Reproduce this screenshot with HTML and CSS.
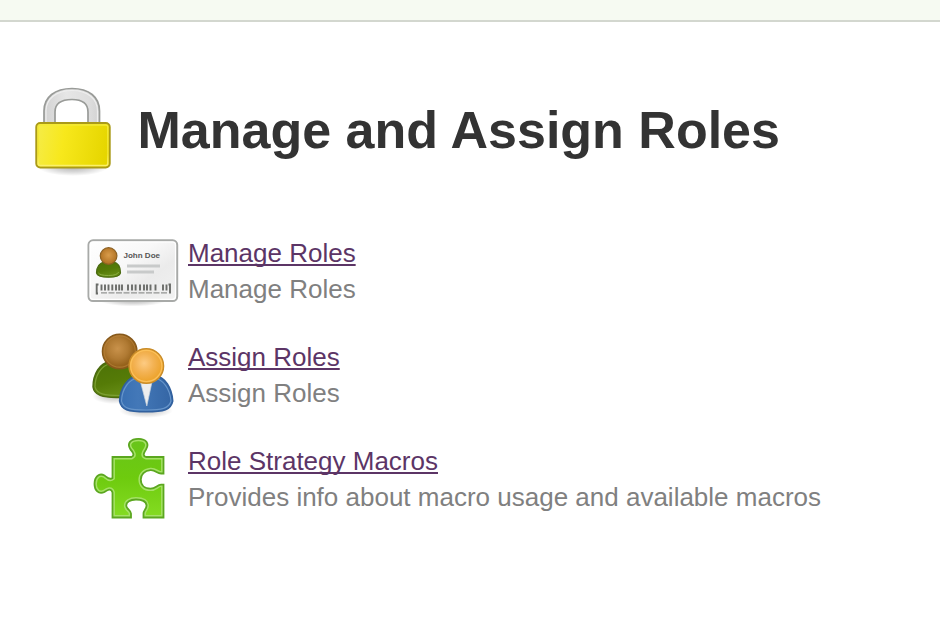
FILE: index.html
```html
<!DOCTYPE html>
<html lang="en">
<head>
<meta charset="utf-8">
<title>Manage and Assign Roles</title>
<link rel="stylesheet" href="styles.css">
</head>
<body>
<header class="topbar"></header>
<main class="content">
  <div class="heading">
    <svg class="heading-icon" viewBox="24 84 96 96" aria-hidden="true">
      <defs>
        <linearGradient id="steel" x1="0" x2="1" y1="0" y2="0"><stop offset="0" stop-color="#d2d2d2"/><stop offset=".4" stop-color="#e6e6e6"/><stop offset=".8" stop-color="#dedede"/><stop offset="1" stop-color="#d2d2d2"/></linearGradient>
        <linearGradient id="brass" x1="0" x2="1" y1="0" y2="0.1"><stop offset="0" stop-color="#f5ec4a"/><stop offset=".4" stop-color="#f7e81c"/><stop offset="1" stop-color="#e6d600"/></linearGradient>
        <linearGradient id="brass-edge" x1="0" x2="0" y1="0" y2="1"><stop offset="0" stop-color="#f4ea35"/><stop offset=".7" stop-color="#f2e42c"/><stop offset="1" stop-color="#fbf06a"/></linearGradient>
        <radialGradient id="shade"><stop offset="0" stop-color="#000" stop-opacity=".3"/><stop offset=".55" stop-color="#000" stop-opacity=".15"/><stop offset="1" stop-color="#000" stop-opacity="0"/></radialGradient>
      </defs>
      <ellipse cx="73" cy="167" rx="35" ry="9" fill="url(#shade)"/>
      <path d="M44 124V111C44 97 55 88.500 72 88.500S99.500 97 99.500 111V124H88V112C88 103.500 83 99.500 72 99.500S55 103.500 55 112V124Z" fill="url(#steel)" stroke="#999b98" stroke-width="1.700"/>
      <path d="M46 122V111C46 99 56 90.500 72 90.500S97.500 99 97.500 111V122" fill="none" stroke="#eee" stroke-width="1.200"/>
      <rect x="36.300" y="123" width="73.400" height="44.500" rx="4" fill="url(#brass)" stroke="#aa9a18" stroke-width="2"/>
      <rect x="38.200" y="125" width="69.600" height="40.600" rx="2" fill="none" stroke="url(#brass-edge)" stroke-width="1.500"/>
    </svg>
    <h1 class="title">Manage and Assign Roles</h1>
  </div>
  <ul class="menu">
    <li class="item">
      <svg class="icon" viewBox="84 222 96 96" aria-hidden="true">
        <defs>
          <linearGradient id="paper" x1="0" x2="1" y1="0" y2="1"><stop offset="0" stop-color="#fff"/><stop offset=".4" stop-color="#f8f8f8"/><stop offset=".65" stop-color="#ebebeb"/><stop offset="1" stop-color="#f2f2f2"/></linearGradient>
          <radialGradient id="tan" cx=".44" cy=".42"><stop offset="0" stop-color="#c9924b"/><stop offset=".6" stop-color="#b07a33"/><stop offset="1" stop-color="#96621b"/></radialGradient>
          <radialGradient id="tan-small" cx=".5" cy=".45"><stop offset="0" stop-color="#d99c4b"/><stop offset="1" stop-color="#b37425"/></radialGradient>
          <linearGradient id="olive" x1="0" x2=".4" y1="0" y2="1"><stop offset="0" stop-color="#4c7107"/><stop offset=".6" stop-color="#557b07"/><stop offset="1" stop-color="#678d16"/></linearGradient>
        </defs>
        <ellipse cx="133" cy="300" rx="34" ry="6.500" fill="url(#shade)"/>
        <rect x="88.500" y="240.300" width="88.700" height="60.700" rx="4.500" fill="url(#paper)" stroke="#a8aaa8" stroke-width="2"/>
        <rect x="90.200" y="242" width="85.300" height="57.300" rx="3" fill="none" stroke="#fff" stroke-width="1.200"/>
        <path d="M96.500 273C96.500 267 100 262.500 104 262H113C118 262.500 120.500 267 120.500 273C120 276 117 277.200 108.500 277.200S97 276 96.500 273Z" fill="url(#olive)" stroke="#4a6a12" stroke-width="1.200"/>
        <path d="M98.500 273Q100 275.500 108.500 275.500T118.700 272" fill="none" stroke="#8aae42" stroke-width="1"/>
        <circle cx="108.600" cy="256" r="8.300" fill="url(#tan-small)" stroke="#8c6123" stroke-width="1.200"/>
        <text class="card-name" x="123.500" y="257.500" textLength="36.500" lengthAdjust="spacingAndGlyphs">John Doe</text>
        <path d="M127 266H160M127 272H154" stroke="#c8caca" stroke-width="2.800"/>
        <path d="M98.500 284.500H96.700V293.500H98M101.500 284.500V290.500M105 284.500V290.500M108.500 284.500V290.500M112.300 284.500V290.500M116 284.500V290.500M119.200 284.500V290.500M122 284.500V290.500M128 284.500V290.500M132 284.500V290.500M135.600 284.500V290.500M140 284.500V290.500M144 284.500V290.500M147 284.500V290.500M150.500 284.500V290.500M155.500 284.500V290.500M163 284.500V290.500M166.500 284.500V290.500M168.500 284.500H170V293.500" fill="none" stroke="#6a6c69" stroke-width="1.900"/>
        <path d="M101 292.800H167" stroke="#929492" stroke-width="1.300" stroke-dasharray="6 1.500"/>
      </svg>
      <div class="label"><a class="link" href="#">Manage Roles</a><span class="description">Manage Roles</span></div>
    </li>
    <li class="item">
      <svg class="icon" viewBox="84 326 96 96" aria-hidden="true">
        <defs>
          <radialGradient id="amber" cx=".44" cy=".42"><stop offset="0" stop-color="#fdcb83"/><stop offset=".55" stop-color="#f3b253"/><stop offset="1" stop-color="#eda531"/></radialGradient>
          <linearGradient id="blue" x1="0" x2="1"><stop offset="0" stop-color="#386fb2"/><stop offset=".35" stop-color="#4378b8"/><stop offset="1" stop-color="#3465a4"/></linearGradient>
        </defs>
        <ellipse cx="114" cy="396" rx="22" ry="8" fill="url(#shade)" opacity=".8"/>
        <path d="M93 387C93 374 100 363 109 362H130C140 364 147 374 147 387C145 395 137 397 120 397.500C102 398 94 395 93 387Z" fill="url(#olive)" stroke="#4b6a10" stroke-width="1.400"/>
        <path d="M95 387C95 376 101 365.500 110 364M95 387C97 394 104 395.500 120 395.500" fill="none" stroke="#7c9f34" stroke-width="1.200"/>
        <circle cx="119.700" cy="351.500" r="17.300" fill="url(#tan)" stroke="#87591b" stroke-width="1.400"/>
        <circle cx="119.700" cy="351.500" r="15.600" fill="none" stroke="#bd8640" stroke-width="1.100" opacity=".6"/>
        <ellipse cx="146" cy="410.500" rx="27" ry="7.500" fill="url(#shade)" opacity=".8"/>
        <path d="M119.500 401C120 388 128 377 137 376H156C165 377 172 388 172.800 401C171 410 164 411.800 146 411.800S121 410 119.500 401Z" fill="url(#blue)" stroke="#31609e" stroke-width="1.400"/>
        <path d="M121.500 401C122 389 129 379 138 378M154 378C163 379 170 389 171 401C169 408.500 162 410 146 410S123 408.500 121.500 401" fill="none" stroke="#6795ca" stroke-width="1.200"/>
        <path d="M140.500 382L146.800 406L152 382Z" fill="#eee" stroke="#c9d2dd" stroke-width=".7"/>
        <circle cx="146.300" cy="366" r="17.300" fill="url(#amber)" stroke="#c98c28" stroke-width="1.400"/>
        <circle cx="146.300" cy="366" r="15.600" fill="none" stroke="#fbc05a" stroke-width="1.200"/>
      </svg>
      <div class="label"><a class="link" href="#">Assign Roles</a><span class="description">Assign Roles</span></div>
    </li>
    <li class="item">
      <svg class="icon" viewBox="84 430 96 96" aria-hidden="true">
        <defs>
          <linearGradient id="green" x1="0" x2="0" y1="0" y2="1"><stop offset="0" stop-color="#68c41b"/><stop offset=".5" stop-color="#6ecb0e"/><stop offset="1" stop-color="#85dc22"/></linearGradient>
          <path id="puzzle" d="M112.500 457H131.500C135 455.500 133 452 130.500 449.500C126.500 443.500 130.500 438.800 138.500 438.800C146.500 438.800 149.500 444 146 449.500C143.500 453 142.500 456 146 457H163.500V473.500H161C157 473.500 155.500 469.800 150.500 470.200C144.500 470.700 140.800 474.500 140.800 479.500C140.800 485 144.500 488.700 150.500 488.700C156 488.700 157 484.700 161 484.700H163.500V517.500H143.500V513.500C143.500 510.500 147 508.500 146.500 505C146 501 141.500 499.500 136 499.500C130 499.500 126 502 126.300 506C126.500 509 131 510.500 131 513.500V517.500H112.500V492.500C111 487.500 107.500 490 104.500 492C98.500 495 94.500 490 94.500 484C94.500 477 99 472.500 104.500 475.500C107 477.500 109.500 480.500 112.500 478Z"/>
          <clipPath id="puzzle-clip"><use href="#puzzle"/></clipPath>
        </defs>
        <use href="#puzzle" fill="url(#green)"/>
        <g clip-path="url(#puzzle-clip)"><use href="#puzzle" fill="none" stroke="#a6e267" stroke-width="4.800"/></g>
        <use href="#puzzle" fill="none" stroke="#5ba71f" stroke-width="1.800"/>
      </svg>
      <div class="label"><a class="link" href="#">Role Strategy Macros</a><span class="description">Provides info about macro usage and available macros</span></div>
    </li>
  </ul>
</main>
</body>
</html>
```
FILE: styles.css
```css
* { box-sizing: border-box; }
body { margin: 0; background: #fff; font-family: "Liberation Sans", Arial, sans-serif; }
.topbar { height: 22px; background: #f6faf2; border-bottom: 2px solid #d3d7cf; }
.content { padding: 62px 24px 0; }
.heading { display: flex; align-items: flex-start; gap: 17.5px; height: 96px; }
.heading-icon, .icon { display: block; flex: none; width: 96px; height: 96px; }
.title { margin: 0; padding: 16px 0 0; color: #333; font-size: 52px; line-height: 60px; white-space: nowrap; }
.menu { display: grid; gap: 8px; margin: 42px 0 0; padding: 0 0 0 60px; list-style: none; }
.item { display: flex; gap: 8px; height: 96px; }
.label { padding-top: 13px; font-size: 26px; line-height: 36px; white-space: nowrap; }
.link { display: block; color: #5c3566; text-decoration: underline; text-decoration-thickness: 2px; text-underline-offset: 2px; text-decoration-skip-ink: none; }
.description { display: block; color: #808080; }
.card-name { fill: #555; font: bold 8px "Liberation Sans", sans-serif; }
```
